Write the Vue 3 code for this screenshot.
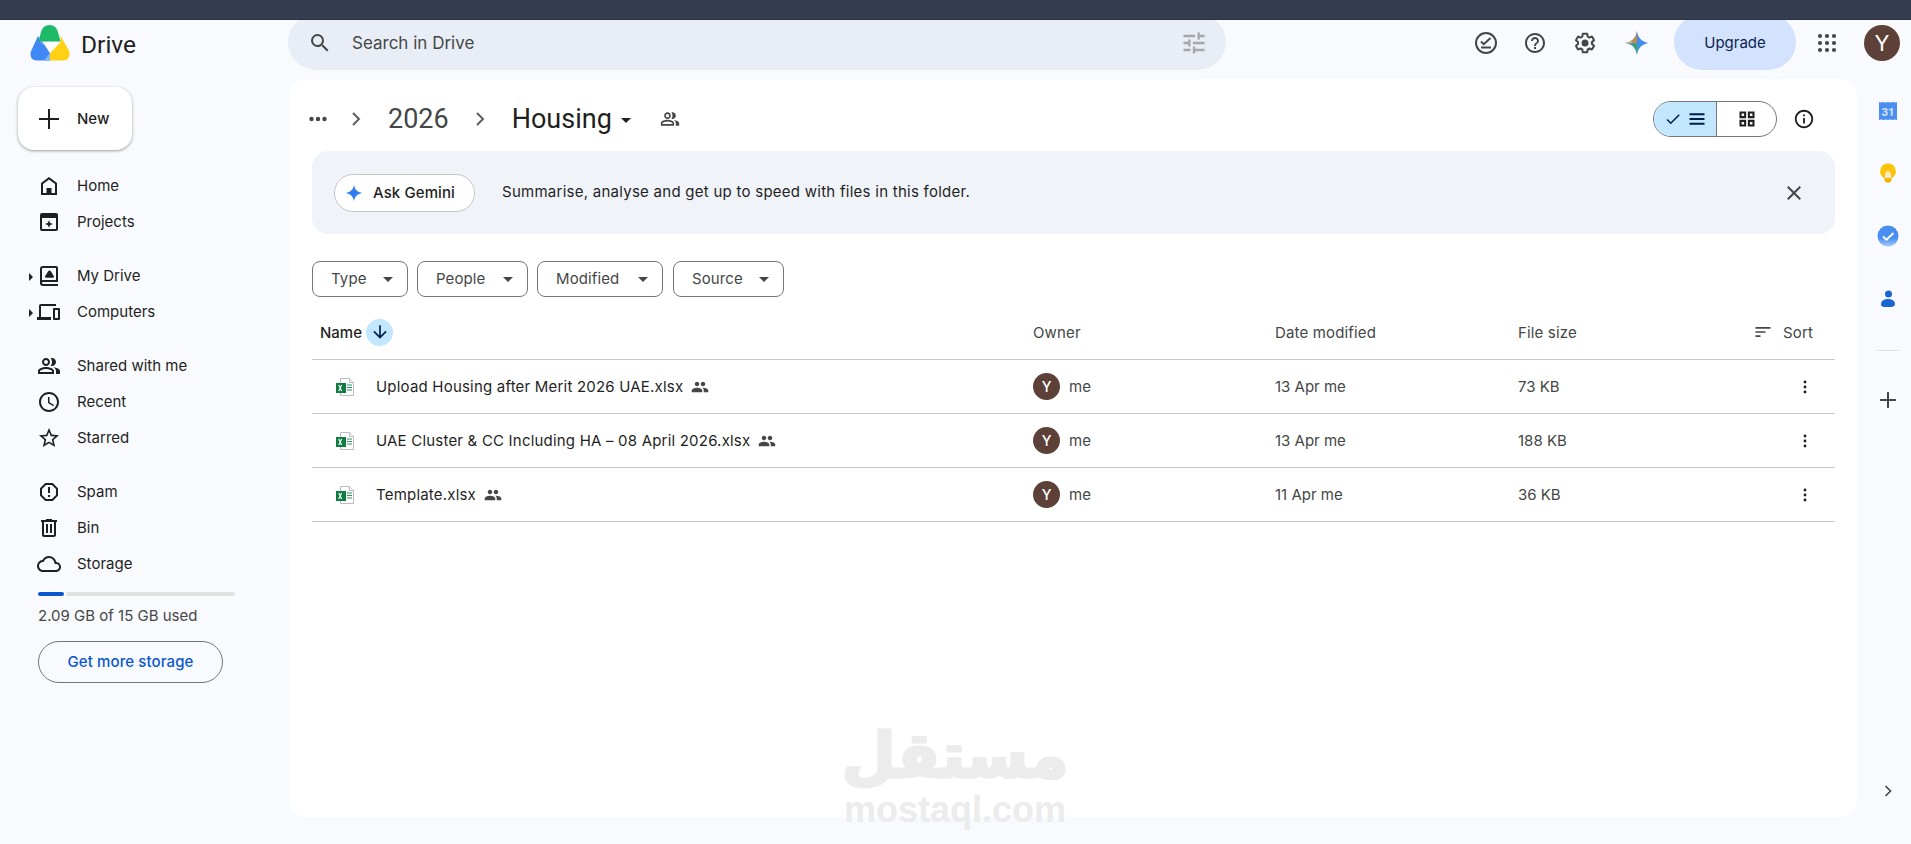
<script setup>
const nav = [
  { id: 'home', label: 'Home' }, { id: 'projects', label: 'Projects' }, { gap: 1 },
  { id: 'drive', label: 'My Drive', caret: 1 }, { id: 'computers', label: 'Computers', caret: 1 }, { gap: 1 },
  { id: 'shared', label: 'Shared with me' }, { id: 'recent', label: 'Recent' }, { id: 'starred', label: 'Starred' }, { gap: 1 },
  { id: 'spam', label: 'Spam' }, { id: 'bin', label: 'Bin' }, { id: 'storage', label: 'Storage' }
]
const paths = {
  home: 'M12 3 4 9v12h16V9l-8-6Zm6 16H6v-9l6-4.500 6 4.500v9ZM9.500 14h5v5h-5v-5Z',
  projects: 'M19 3H5a2 2 0 0 0-2 2v14a2 2 0 0 0 2 2h14a2 2 0 0 0 2-2V5a2 2 0 0 0-2-2Zm0 16H5V8h14v11ZM12 10l1 2.800 2.800 1.200-2.800 1.200-1 2.800-1-2.800L8.200 14l2.800-1.200L12 10Z',
  drive: 'M19 2H6a3 3 0 0 0-3 3v14a3 3 0 0 0 3 3h15v-2H6a1 1 0 0 1 0-2h15V4a2 2 0 0 0-2-2Zm0 14H6c-.35 0-.69.06-1 .17V5a1 1 0 0 1 1-1h13v12ZM12.500 6.500a1.500 1.500 0 0 1 1.300.75L16.800 12a1.200 1.200 0 0 1-1 1.800H9.200a1.200 1.200 0 0 1-1-1.800l3-4.750a1.500 1.500 0 0 1 1.300-.75Z',
  computers: 'M4 6h15V4H4a2 2 0 0 0-2 2v11H0v3h14v-3H4V6Zm18 2h-5a1 1 0 0 0-1 1v10a1 1 0 0 0 1 1h5a1 1 0 0 0 1-1V9a1 1 0 0 0-1-1Zm-1 10h-3v-8h3v8Z',
  shared: 'M16.670 13.130C18.040 14.060 19 15.320 19 17v3h4v-3c0-2.180-3.570-3.470-6.330-3.870ZM15 12c2.210 0 4-1.790 4-4s-1.790-4-4-4c-.47 0-.91.1-1.330.24C14.500 5.270 15 6.580 15 8s-.5 2.730-1.330 3.760c.42.14.86.24 1.330.24ZM9 12c2.210 0 4-1.790 4-4s-1.790-4-4-4-4 1.790-4 4 1.790 4 4 4Zm0-6c1.100 0 2 .9 2 2s-.9 2-2 2-2-.9-2-2 .9-2 2-2ZM9 13c-2.670 0-8 1.340-8 4v3h16v-3c0-2.660-5.330-4-8-4Zm6 5H3v-.99C3.200 16.290 6.300 15 9 15s5.800 1.290 6 2v1Z',
  recent: 'M11.990 2C6.470 2 2 6.480 2 12s4.470 10 9.990 10C17.520 22 22 17.520 22 12S17.520 2 11.990 2ZM12 20c-4.420 0-8-3.580-8-8s3.580-8 8-8 8 3.580 8 8-3.580 8-8 8Zm.5-13H11v6l5.250 3.150.75-1.230-4.500-2.670V7Z',
  starred: 'M22 9.240l-7.190-.62L12 2 9.190 8.630 2 9.240l5.460 4.730L5.820 21 12 17.270 18.180 21l-1.630-7.030L22 9.240ZM12 15.400l-3.760 2.270 1-4.280-3.320-2.880 4.380-.38L12 6.100l1.710 4.040 4.380.38-3.320 2.880 1 4.280L12 15.400Z',
  spam: 'M15.730 3H8.270L3 8.270v7.460L8.270 21h7.460L21 15.730V8.270L15.730 3ZM19 14.900 14.900 19H9.100L5 14.900V9.100L9.100 5h5.800L19 9.100v5.800ZM11 7h2v6h-2V7Zm0 8h2v2h-2v-2Z',
  bin: 'M15 4V3H9v1H4v2h1v13c0 1.100.9 2 2 2h10c1.100 0 2-.9 2-2V6h1V4h-5Zm2 15H7V6h10v13ZM9 8h2v9H9V8Zm4 0h2v9h-2V8Z',
  storage: 'M19.350 10.040A7.490 7.490 0 0 0 12 4C9.110 4 6.600 5.640 5.350 8.040A5.994 5.994 0 0 0 0 14c0 3.310 2.690 6 6 6h13c2.760 0 5-2.240 5-5 0-2.640-2.050-4.780-4.650-4.960ZM19 18H6c-2.210 0-4-1.790-4-4 0-2.050 1.530-3.760 3.560-3.970l1.070-.11.5-.95A5.469 5.469 0 0 1 12 6c2.620 0 4.880 1.860 5.390 4.430l.3 1.500 1.530.11A2.980 2.980 0 0 1 22 15c0 1.650-1.350 3-3 3Z'
}
const chips = ['Type', 'People', 'Modified', 'Source']
const files = [
  { name: 'Upload Housing after Merit 2026 UAE.xlsx', date: '13 Apr me', size: '73 KB' },
  { name: 'UAE Cluster & CC Including HA – 08 April 2026.xlsx', date: '13 Apr me', size: '188 KB' },
  { name: 'Template.xlsx', date: '11 Apr me', size: '36 KB' }
]
</script>

<template>
  <div class="page">
    <div class="strip"></div>
    <header class="header">
      <div class="brand">
        <svg class="logo" viewBox="0 0 40 38" width="40" height="38">
          <path d="M8 12 13 18.500 20 29V36.500H7Q.5 36.500.5 30 .5 27.500 2 25Z" fill="#4089f5"/>
          <path d="M8 12 13 18.500 14.500 22 10 17.500Z" fill="#86b4f8"/>
          <path d="M14 36.500 20 29V36.500Z" fill="#86b4f8"/>
          <path d="M30.500 11.500 38 25Q39.500 27.500 39.500 30 39.500 36.500 33 36.500H20V29L30.500 18Z" fill="#ffd014"/>
          <path d="M13 18h17.500L20 29Z" fill="#fff"/>
          <path d="M8.500 17.500 11 8Q13 1 19.500 1 26 1 28 8L30.500 17.500Z" fill="#1fba68"/>
        </svg>
        <span class="brand-name">Drive</span>
      </div>
      <div class="search">
        <svg class="search-ic" viewBox="0 0 24 24" width="24" height="24"><path fill="#444746" d="M15.500 14h-.79l-.28-.27A6.470 6.470 0 0 0 16 9.500 6.500 6.500 0 1 0 9.500 16c1.610 0 3.090-.59 4.230-1.570l.27.28v.79l5 4.990L20.490 19l-4.990-5Zm-6 0C7.010 14 5 11.990 5 9.500S7.010 5 9.500 5 14 7.010 14 9.500 11.990 14 9.500 14Z"/></svg>
        <span class="search-text">Search in Drive</span>
        <svg class="tune" viewBox="0 0 24 24" width="28" height="28"><path fill="#a5a7a8" d="M3 17v2h6v-2H3ZM3 5v2h10V5H3Zm10 16v-2h8v-2h-8v-2h-2v6h2ZM7 9v2H3v2h4v2h2V9H7Zm14 4v-2H11v2h10Zm-6-4h2V7h4V5h-4V3h-2v6Z"/></svg>
      </div>
      <div class="tools">
        <svg class="tool" viewBox="0 0 24 24" width="24" height="24"><circle cx="12" cy="12" r="10" fill="none" stroke="#444746" stroke-width="2"/><path d="M7 10.500l2.800 2.700L16.500 7M7 16.500h10" fill="none" stroke="#444746" stroke-width="2"/></svg>
        <svg class="tool t2" viewBox="0 0 24 24" width="24" height="24"><path fill="#444746" d="M11 18h2v-2h-2v2Zm1-16C6.480 2 2 6.480 2 12s4.480 10 10 10 10-4.480 10-10S17.520 2 12 2Zm0 18c-4.410 0-8-3.590-8-8s3.590-8 8-8 8 3.590 8 8-3.590 8-8 8Zm0-14c-2.210 0-4 1.790-4 4h2c0-1.100.9-2 2-2s2 .9 2 2c0 2-3 1.750-3 5h2c0-2.250 3-2.500 3-5 0-2.210-1.790-4-4-4Z"/></svg>
        <svg class="tool t3" viewBox="0 0 24 24" width="24" height="24"><path fill="#444746" d="M13.850 22.250h-3.700c-.740 0-1.360-.54-1.470-1.270l-.270-1.890c-.270-.140-.530-.290-.790-.460l-1.800.720c-.7.260-1.470-.030-1.810-.65L2.200 15.530c-.350-.660-.200-1.440.360-1.880l1.530-1.190c-.010-.150-.020-.300-.020-.460 0-.150.010-.310.020-.460l-1.520-1.190c-.590-.450-.740-1.260-.370-1.880l1.850-3.190c.340-.620 1.110-.900 1.790-.630l1.810.730c.260-.170.520-.320.780-.460l.270-1.910c.100-.700.720-1.250 1.460-1.250h3.700c.740 0 1.360.540 1.470 1.270l.270 1.890c.270.140.530.290.790.460l1.800-.720c.710-.260 1.480.030 1.820.65l1.840 3.180c.360.660.200 1.440-.360 1.880l-1.520 1.200c.010.150.020.300.020.460s-.010.310-.020.460l1.520 1.190c.560.450.720 1.230.370 1.860l-1.860 3.220c-.340.620-1.110.900-1.800.630l-1.800-.720c-.260.170-.520.320-.780.460l-.270 1.910c-.100.700-.720 1.250-1.460 1.250Zm-3.230-2h2.760l.370-2.550.530-.220c.440-.180.880-.440 1.340-.780l.450-.340 2.380.960 1.380-2.400-2.030-1.580.070-.560c.030-.260.060-.520.060-.780s-.030-.530-.060-.780l-.070-.560 2.030-1.580-1.390-2.400-2.390.960-.450-.350c-.420-.320-.870-.580-1.330-.770l-.520-.220-.370-2.550h-2.760l-.370 2.550-.530.210c-.440.190-.880.440-1.340.790l-.450.330-2.380-.950-1.390 2.390 2.030 1.580-.070.560c-.030.260-.060.530-.060.780s.020.520.060.780l.070.560-2.030 1.580 1.380 2.400 2.390-.960.450.350c.43.330.86.580 1.330.770l.53.220.380 2.550ZM12 15.500a3.500 3.500 0 1 1 0-7 3.500 3.500 0 0 1 0 7Z"/></svg>
        <svg class="spark" viewBox="0 0 24 24" width="24" height="24">
          <path d="M12 0c.8 6.500 4.500 10.800 12 12-7.500 1.200-11.200 5.500-12 12-.8-6.500-4.500-10.800-12-12C7.500 10.800 11.200 6.500 12 0Z" fill="#3f8ef2"/>
          <path d="M12 0c-.8 6.500-4.500 10.800-12 12h12V0Z" fill="#c08a4d"/>
          <path d="M12 24c-.4-4-2-8-5-10l5-2v12Z" fill="#34a853"/>
          <path d="M0 12c2.500-.4 4-1 5.500-2L8 12H0Z" fill="#fbc02d"/>
        </svg>
        <div class="upgrade">Upgrade</div>
        <svg class="apps" viewBox="0 0 24 24" width="24" height="24"><g fill="#444746"><circle cx="5" cy="5" r="2.100"/><circle cx="12" cy="5" r="2.100"/><circle cx="19" cy="5" r="2.100"/><circle cx="5" cy="12" r="2.100"/><circle cx="12" cy="12" r="2.100"/><circle cx="19" cy="12" r="2.100"/><circle cx="5" cy="19" r="2.100"/><circle cx="12" cy="19" r="2.100"/><circle cx="19" cy="19" r="2.100"/></g></svg>
        <div class="avatar">Y</div>
      </div>
    </header>

    <div class="body">
      <aside class="side">
        <button class="new"><svg viewBox="0 0 24 24" width="24" height="24"><path fill="#1f1f1f" d="M22 13h-9v9h-2v-9H2v-2h9V2h2v9h9v2Z"/></svg><span>New</span></button>
        <nav class="nav">
          <template v-for="(n, i) in nav" :key="i">
            <div v-if="n.gap" class="nav-gap"></div>
            <div v-else class="nav-item">
              <i v-if="n.caret" class="caret"></i>
              <svg class="nav-ic" viewBox="0 0 24 24" width="24" height="24"><path fill="#1f1f1f" :d="paths[n.id]"/></svg>
              <span>{{ n.label }}</span>
            </div>
          </template>
        </nav>
        <div class="quota"><i></i><b></b></div>
        <div class="quota-text">2.09 GB of 15 GB used</div>
        <div class="more"><span>Get more storage</span></div>
      </aside>

      <main class="card">
        <div class="crumbs">
          <svg class="c-dots" viewBox="0 0 24 24" width="24" height="24"><g fill="#444746"><circle cx="5.500" cy="12" r="2.200"/><circle cx="12" cy="12" r="2.200"/><circle cx="18.500" cy="12" r="2.200"/></g></svg>
          <svg class="c-chev c1" viewBox="0 0 24 24" width="24" height="24"><path fill="none" stroke="#5e5e5e" stroke-width="2" d="M9 6l6 6-6 6"/></svg>
          <span class="c-year">2026</span>
          <svg class="c-chev c2" viewBox="0 0 24 24" width="24" height="24"><path fill="none" stroke="#5e5e5e" stroke-width="2" d="M9 6l6 6-6 6"/></svg>
          <span class="c-folder">Housing</span>
          <i class="c-caret"></i>
          <svg class="c-people" viewBox="0 0 24 24" width="20" height="20"><path fill="#444746" :d="paths.shared"/></svg>
          <div class="toggle">
            <div class="t-on">
              <svg viewBox="0 0 24 24" width="18" height="18"><path fill="#041e49" d="M9 16.170 4.830 12l-1.420 1.410L9 19 21 7l-1.410-1.410L9 16.170Z"/></svg>
              <svg viewBox="0 0 24 24" width="20" height="20"><path fill="#041e49" d="M3 5h18v2.500H3V5Zm0 5.800h18v2.500H3v-2.500Zm0 5.700h18V19H3v-2.500Z"/></svg>
            </div>
            <div class="t-off">
              <svg viewBox="0 0 24 24" width="20" height="20"><path fill="#1f1f1f" d="M3 3h8v8H3V3Zm2.500 2.500v3h3v-3h-3ZM13 3h8v8h-8V3Zm2.500 2.500v3h3v-3h-3ZM3 13h8v8H3v-8Zm2.500 2.500v3h3v-3h-3ZM13 13h8v8h-8v-8Zm2.500 2.500v3h3v-3h-3Z"/></svg>
            </div>
          </div>
          <svg class="c-info" viewBox="0 0 24 24" width="22" height="22"><path fill="#1f1f1f" d="M11 7h2v2h-2V7Zm0 4h2v6h-2v-6Zm1-9C6.480 2 2 6.480 2 12s4.480 10 10 10 10-4.480 10-10S17.520 2 12 2Zm0 18c-4.410 0-8-3.590-8-8s3.590-8 8-8 8 3.590 8 8-3.590 8-8 8Z"/></svg>
        </div>

        <section class="banner">
          <div class="ask">
            <svg viewBox="0 0 24 24" width="18" height="18"><path fill="#2f7bf0" d="M12 1c.8 6 4.500 10 11 11-6.500 1-10.200 5-11 11-.8-6-4.500-10-11-11C7.500 11 11.200 7 12 1Z"/></svg>
            <span>Ask Gemini</span>
          </div>
          <span class="banner-text">Summarise, analyse and get up to speed with files in this folder.</span>
          <svg class="close" viewBox="0 0 24 24" width="24" height="24"><path fill="#444746" d="M19 6.410 17.590 5 12 10.590 6.410 5 5 6.410 10.590 12 5 17.590 6.410 19 12 13.410 17.590 19 19 17.590 13.410 12 19 6.410Z"/></svg>
        </section>

        <div class="chips">
          <div v-for="c in chips" :key="c" class="chip"><span>{{ c }}</span><i></i></div>
        </div>

        <div class="row head">
          <div class="name-h"><span>Name</span><b class="sort-arrow"><svg viewBox="0 0 24 24" width="20" height="20"><path fill="#041e49" d="M20 12l-1.410-1.410L13 16.170V4h-2v12.170l-5.580-5.590L4 12l8 8 8-8Z"/></svg></b></div>
          <div>Owner</div>
          <div>Date modified</div>
          <div>File size</div>
          <div class="sort"><svg viewBox="0 0 24 24" width="20" height="20"><path fill="#444746" d="M3 18h6v-2H3v2ZM3 6v2h18V6H3Zm0 7h12v-2H3v2Z"/></svg><span>Sort</span></div>
        </div>
        <div v-for="f in files" :key="f.name" class="row file">
          <div class="f-name">
            <svg class="xls" viewBox="0 0 20 20" width="20" height="20">
              <path d="M5.500 1.500h9l4 4v13h-13z" fill="#fff" stroke="#b9bdc1"/>
              <path d="M14.500 1.500v4h4" fill="#eef0f1" stroke="#b9bdc1"/>
              <path d="M12 8h5M12 10.500h5M12 13h5" stroke="#2a9160" stroke-width="1.100"/>
              <rect x="1" y="6" width="10" height="10" fill="#107c41"/>
              <path d="M3.800 8l2.800 6M6.600 8l-2.800 6" stroke="#fff" stroke-width="1.200"/>
            </svg>
            <span class="f-text">{{ f.name }}</span>
            <svg class="f-shared" viewBox="0 0 24 24" width="18" height="18"><path fill="#444746" d="M16 11c1.660 0 2.990-1.340 2.990-3S17.660 5 16 5c-1.660 0-3 1.340-3 3s1.340 3 3 3Zm-8 0c1.660 0 2.990-1.340 2.990-3S9.660 5 8 5C6.340 5 5 6.340 5 8s1.340 3 3 3Zm0 2c-2.330 0-7 1.170-7 3.500V19h14v-2.500c0-2.330-4.670-3.500-7-3.500Zm8 0c-.29 0-.62.020-.97.050 1.160.84 1.970 1.970 1.970 3.450V19h6v-2.500c0-2.330-4.670-3.500-7-3.500Z"/></svg>
          </div>
          <div class="f-owner"><b>Y</b><span>me</span></div>
          <div>{{ f.date }}</div>
          <div>{{ f.size }}</div>
          <div class="f-more"><svg viewBox="0 0 24 24" width="20" height="20"><g fill="#1f1f1f"><circle cx="12" cy="6" r="1.700"/><circle cx="12" cy="12" r="1.700"/><circle cx="12" cy="18" r="1.700"/></g></svg></div>
        </div>
      </main>

      <aside class="rail">
        <svg class="r-ic" viewBox="0 0 20 20" width="20" height="20"><path d="M1 1l2.250.6L5.500 1l2.250.6L10 1l2.250.6L14.500 1l2.250.6L19 1v18l-2.250-.6-2.250.6-2.250-.6L10 19l-2.250-.6L5.500 19l-2.250-.6L1 19z" fill="#4a8ff0"/><text x="10" y="15" text-anchor="middle" class="cal">31</text></svg>
        <svg class="r-ic" viewBox="0 0 20 20" width="20" height="20"><path d="M10 .5a7.800 7.800 0 0 0-4 14.500h8A7.800 7.800 0 0 0 10 .5Z" fill="#fbc40b"/><path d="M6.500 15h7v2.500l-1.500 2h-4l-1.500-2z" fill="#f5b400"/><path d="M7 10.500l3-3 3 3v4.500H7z" fill="#fdeac2"/></svg>
        <svg class="r-ic" viewBox="0 0 22 22" width="22" height="22"><defs><linearGradient id="tg" x1="0" y1="0" x2="0" y2="1"><stop offset=".6" stop-color="#4a8ff0"/><stop offset="1" stop-color="#a9ccf9"/></linearGradient></defs><circle cx="11" cy="11" r="10.500" fill="url(#tg)"/><path d="M6 11.500l3.500 3.200L16.500 8" fill="none" stroke="#fff" stroke-width="1.800"/></svg>
        <svg class="r-ic" viewBox="0 0 20 20" width="20" height="20"><circle cx="10.500" cy="5" r="3.500" fill="#1a66d2"/><path d="M3 15.500C3 11.500 6.500 10 10 10s7 1.500 7 5c0 2-2 3-4 3H6c-1.500 0-3-1-3-2.500Z" fill="#1a66d2"/></svg>
        <div class="r-line"></div>
        <svg class="r-plus" viewBox="0 0 24 24" width="24" height="24"><path fill="#444746" d="M20 13h-7v7h-2v-7H4v-2h7V4h2v7h7v2Z"/></svg>
        <svg class="r-chev" viewBox="0 0 24 24" width="20" height="20"><path fill="none" stroke="#444746" stroke-width="2" d="M9 6l6 6-6 6"/></svg>
      </aside>
    </div>

    <div class="mark">
      <div class="mark-ar" lang="ar" dir="rtl">مستقل</div>
      <div class="mark-en">mostaql.com</div>
    </div>
  </div>
</template>

<style>
html, body { margin: 0; background: #f8fafd; overflow: hidden; }
</style>

<style scoped>
.page { position: relative; width: 1911px; height: 844px; overflow: hidden; background: #f8fafd; color: #1f1f1f; font-family: Inter, Roboto, "Liberation Sans", sans-serif; font-size: 15px; }
svg { display: block; flex: none; }
.strip { position: relative; z-index: 2; height: 19px; background: #343d4f; border-bottom: 1px solid #2d3442; }
.header { display: flex; align-items: center; height: 59px; }
.brand { display: flex; align-items: center; width: 288px; flex: none; box-sizing: border-box; padding: 0 0 13px 30px; }
.brand-name { margin-left: 11px; padding-top: 2px; font: 400 24.500px Roboto, sans-serif; color: #1f1f1f; }
.search { display: flex; align-items: center; box-sizing: border-box; width: 938px; height: 56px; margin-top: -15px; padding: 2px 18px 0 20px; background: #e9eef6; border-radius: 28px; }
.search-text { margin-left: 20px; flex: 1; font-size: 17px; color: #444746; }
.tools { display: flex; align-items: center; flex: 1; padding-left: 248px; margin-top: -15px; padding-top: 2px; height: 56px; box-sizing: border-box; }
.t2 { margin-left: 25px; }
.t3 { margin-left: 26px; }
.spark { margin-left: 28px; }
.upgrade { display: flex; align-items: center; justify-content: center; width: 122px; height: 56px; margin: -2px 0 0 25px; border-radius: 28px; background: #d3e3fd; color: #0b1f55; font-size: 15px; }
.apps { margin-left: 19px; }
.avatar { display: flex; align-items: center; justify-content: center; width: 36px; height: 36px; margin-left: 25px; border-radius: 50%; background: #5d4037; color: #fff; font-size: 22px; }
.body { display: flex; height: 738px; }
.side { width: 289px; flex: none; box-sizing: border-box; padding: 8px 0 0 18px; }
.new { display: flex; align-items: center; width: 114px; height: 63px; padding: 0 0 0 19px; border: 0; border-radius: 16px; background: #fff; box-shadow: 0 1px 2px rgba(60,64,67,.3), 0 1px 3px 1px rgba(60,64,67,.15); color: #1f1f1f; font: 500 15px Inter, sans-serif; }
.new span { margin-left: 16px; }
.nav { margin-top: 18px; }
.nav-item { position: relative; display: flex; align-items: center; height: 36px; }
.nav-ic { margin-left: 19px; }
.nav-item span { margin-left: 16px; padding-bottom: 2px; }
.nav-gap { height: 18px; }
.caret { position: absolute; left: 11px; top: 15px; border-left: 4px solid #1f1f1f; border-top: 4px solid transparent; border-bottom: 4px solid transparent; }
.quota { display: flex; gap: 2px; width: 197px; height: 4px; margin: 10px 0 0 20px; }
.quota i { width: 26px; border-radius: 2px; background: #0b57d0; }
.quota b { flex: 1; border-radius: 2px; background: #e1e3e1; }
.quota-text { margin: 10px 0 0 20px; color: #444746; line-height: 20px; }
.more { display: flex; align-items: center; justify-content: center; box-sizing: border-box; width: 185px; height: 42px; margin: 15px 0 0 20px; padding-bottom: 2px; border: 1px solid #747775; border-radius: 21px; color: #0b57d0; font-weight: 500; letter-spacing: .1px; }
.card { width: 1568px; flex: none; box-sizing: border-box; padding: 0 22px 0 23px; background: #fff; border-radius: 16px; }
.crumbs { display: flex; align-items: center; height: 72px; padding-top: 8px; box-sizing: border-box; }
.c-dots { margin-left: -6px; }
.c-chev.c1 { margin-left: 14px; }
.c-chev.c2 { margin-left: 19px; }
.c-year { margin-left: 20px; font: 400 27px Roboto, sans-serif; color: #444746; }
.c-folder { margin-left: 20px; font: 400 27px Roboto, sans-serif; }
.c-caret { margin: 2px 0 0 9px; border-top: 5px solid #1f1f1f; border-left: 5px solid transparent; border-right: 5px solid transparent; }
.c-people { margin-left: 29px; }
.toggle { display: flex; margin-left: auto; width: 124px; height: 36px; box-sizing: border-box; border: 1px solid #747775; border-radius: 18px; overflow: hidden; }
.t-on { display: flex; align-items: center; justify-content: center; gap: 5px; box-sizing: border-box; width: 63px; background: #c2e7ff; border-right: 1px solid #747775; }
.t-off { display: flex; align-items: center; justify-content: center; flex: 1; }
.c-info { margin: 0 20px 0 16px; }
.banner { display: flex; align-items: center; height: 83px; box-sizing: border-box; padding: 0 29px 0 22px; background: #f0f4f9; border-radius: 16px; }
.ask { display: flex; align-items: center; gap: 10px; box-sizing: border-box; width: 141px; height: 38px; padding-left: 10px; border: 1px solid #c4c7c5; border-radius: 19px; background: #fff; font-weight: 500; letter-spacing: .1px; }
.banner-text { flex: 1; margin-left: 27px; letter-spacing: .26px; padding-bottom: 2px; }
.chips { display: flex; gap: 9px; margin-top: 27px; }
.chip { display: flex; align-items: center; justify-content: space-between; box-sizing: border-box; height: 36px; padding: 0 14px 0 18px; border: 1px solid #747775; border-radius: 8px; color: #444746; letter-spacing: .1px; }
.chip span { padding-bottom: 1px; }
.chip i { border-top: 5px solid #444746; border-left: 5px solid transparent; border-right: 5px solid transparent; }
.chip:nth-child(1) { width: 96px; }
.chip:nth-child(2) { width: 111px; }
.chip:nth-child(3) { width: 126px; }
.chip:nth-child(4) { width: 111px; margin-left: 1px; }
.row { display: grid; grid-template-columns: 721px 242px 243px 235px 82px; align-items: center; border-bottom: 1px solid #c7c7c7; box-sizing: border-box; color: #444746; }
.head { height: 63px; padding-top: 8px; letter-spacing: .15px; }
.file { height: 54px; }
.name-h { display: flex; align-items: center; padding-left: 8px; color: #1f1f1f; font-weight: 500; letter-spacing: 0; }
.sort-arrow { display: flex; align-items: center; justify-content: center; width: 27px; height: 27px; margin-left: 4px; border-radius: 50%; background: #c2e7ff; }
.sort { display: flex; align-items: center; gap: 10px; }
.f-name { display: flex; align-items: center; padding-left: 23px; color: #1f1f1f; }
.f-text { margin-left: 21px; letter-spacing: .2px; }
.f-shared { margin-left: 8px; }
.f-owner { display: flex; align-items: center; gap: 9px; }
.f-owner b { display: flex; align-items: center; justify-content: center; width: 27px; height: 27px; border-radius: 50%; background: #5d4037; color: #fff; font-size: 14px; font-weight: 500; }
.f-more { display: flex; justify-content: flex-end; padding-right: 20px; }
.rail { position: relative; flex: 1; display: flex; flex-direction: column; align-items: center; padding: 22px 0 0 8px; }
.r-ic { margin-bottom: 42px; }
.cal { font: 700 11.500px Roboto, sans-serif; fill: #d5e5ff; }
.r-line { width: 24px; height: 1px; margin-top: -1px; background: #e1e3e1; }
.r-plus { margin-top: 37px; }
.r-chev { margin-top: auto; margin-bottom: 16px; }
.mark { position: absolute; left: 840px; top: 719px; width: 230px; text-align: center; pointer-events: none; color: #ececec; font-family: "DejaVu Sans", sans-serif; font-weight: 700; }
.mark-ar { font-size: 62px; line-height: 73px; -webkit-text-stroke: 3px #ececec; }
.mark-en { font: 700 36px/36px "Liberation Sans", sans-serif; }
</style>
